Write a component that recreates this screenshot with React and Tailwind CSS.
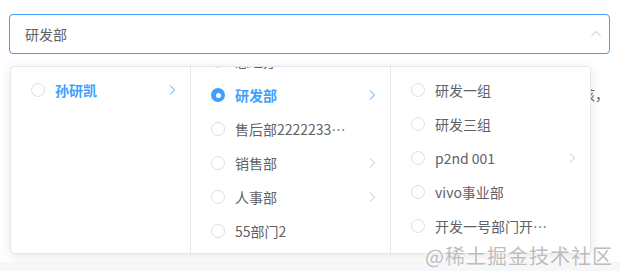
import React from "react"

const Chevron = ({ color = "#c0c4cc" }) => (
  <svg width="12" height="12" viewBox="0 0 12 12" className="absolute right-[12px] top-1/2 -translate-y-1/2">
    <polyline points="4,1.5 8.5,6 4,10.5" fill="none" stroke={color} strokeWidth="1" />
  </svg>
)

const Radio = ({ checked }) =>
  checked ? (
    <span className="w-[14px] h-[14px] rounded-full bg-[#409eff] flex items-center justify-center shrink-0">
      <span className="w-[5px] h-[5px] rounded-full bg-white" />
    </span>
  ) : (
    <span className="w-[14px] h-[14px] rounded-full border border-[#dcdfe6] bg-white shrink-0" />
  )

function Item({ label, checked, active, more }) {
  return (
    <div className="relative h-[34px] flex items-center pl-[20px] pr-[30px]">
      <Radio checked={checked} />
      <span
        className={`ml-[10px] mr-[8px] truncate ${
          active ? "text-[#409eff] font-bold" : "text-[#606266]"
        }`}
      >
        {label}
      </span>
      {more && <Chevron color={active ? "#409eff" : "#c0c4cc"} />}
    </div>
  )
}

export default function App() {
  return (
    <div
      className="relative w-[620px] h-[271px] bg-white overflow-hidden text-[14px]"
      style={{ fontFamily: '"Noto Sans CJK SC", "Noto Sans", sans-serif' }}
    >
      {/* INPUT */}
      <div className="pt-[14px] pl-[9px]">
        <div className="w-[601px] h-[40px] border border-[#409eff] rounded-[4px] flex items-center justify-between pl-[15px] pr-[6px]">
          <span className="text-[#606266]">研发部</span>
          <svg width="12" height="12" viewBox="0 0 12 12" className="mr-[1px]">
            <polyline points="1.5,8 6,3.5 10.5,8" fill="none" stroke="#c0c4cc" strokeWidth="1" />
          </svg>
        </div>
      </div>

      {/* BACKGROUND TEXT */}
      <div className="absolute left-[539px] top-[84px] text-[#606266] whitespace-nowrap">需要审核，</div>
      <div className="absolute left-0 right-0 bottom-0 h-[9px] bg-[#f6f7f8]" />

      {/* DROPDOWN */}
      <div className="absolute left-[10px] top-[66px] w-[581px] h-[188px] bg-white border border-[#e4e7ed] rounded-[4px] shadow-[0_2px_12px_0_rgba(0,0,0,0.1)] flex overflow-hidden z-10">
        <div className="w-[180px] shrink-0 border-r border-[#e4e7ed] py-[6px]">
          <Item label="孙研凯" active more />
        </div>

        <div className="w-[200px] shrink-0 border-r border-[#e4e7ed] overflow-hidden">
          <div className="-mt-[29px] py-[6px]">
            <Item label="总经办" />
            <Item label="研发部" checked active more />
            <Item label="售后部22222333333" />
            <Item label="销售部" more />
            <Item label="人事部" more />
            <Item label="55部门2" />
          </div>
        </div>

        <div className="flex-1 min-w-0 py-[6px]">
          <Item label="研发一组" />
          <Item label="研发三组" />
          <Item label="p2nd 001" more />
          <Item label="vivo事业部" />
          <Item label="开发一号部门开发二组" />
        </div>
      </div>

      {/* WATERMARK */}
      <div className="absolute right-[7px] top-[241px] z-20 text-[20px] tracking-[1px] text-[#bdbdbd] whitespace-nowrap [text-shadow:0_0_2px_#fff]">
        @稀土掘金技术社区
      </div>
    </div>
  )
}
